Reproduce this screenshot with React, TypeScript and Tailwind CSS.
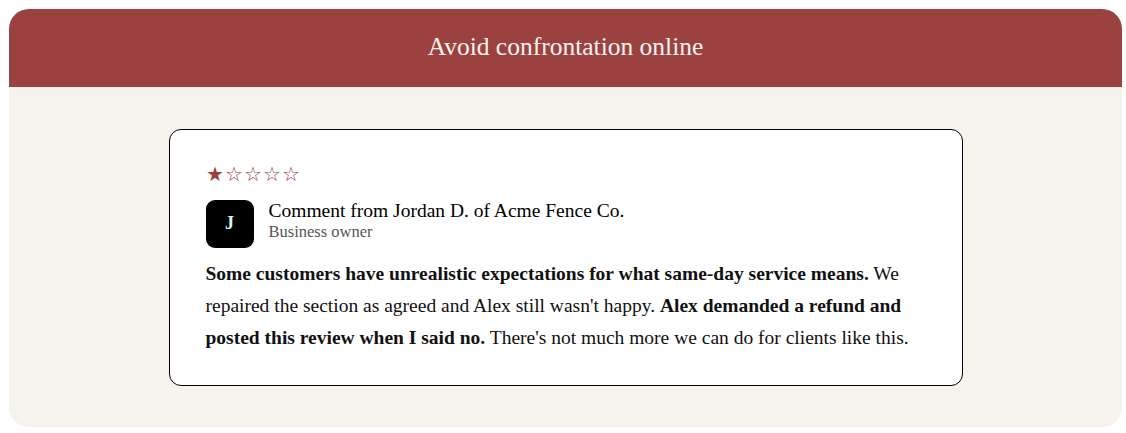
import React from "react";

const STARS = [true, false, false, false, false];

export default function App() {
  return (
    <div className="min-h-screen bg-white p-[9px] pr-[4px] font-['Liberation_Serif',serif]">
      <div className="rounded-[20px] overflow-hidden bg-[#f6f3ec] h-[418px] flex flex-col">
        <div className="h-[78px] bg-[#9b4240] flex items-center justify-center pb-[2px]">
          <h1 className="text-[25.5px] text-[#fdf3ef] leading-none">Avoid confrontation online</h1>
        </div>

        <div className="flex justify-center pt-[42px]">
          <div className="w-[794px] h-[257px] bg-white border border-black rounded-[12px] px-[36px] pt-[35px]">
            <div className="flex gap-[1px] text-[#9b4240] text-[19.5px] leading-none">
              {STARS.map((filled, i) => (
                <span key={i}>{filled ? "★" : "☆"}</span>
              ))}
            </div>

            <div className="flex items-center gap-[15px] mt-[15px]">
              <div className="w-[48px] h-[48px] rounded-[9px] bg-black flex items-center justify-center text-[#d8f5f1] text-[18px] font-bold">
                J
              </div>
              <div className="flex flex-col pb-[6px]">
                <span className="text-[19.5px] text-black leading-[22px]">
                  Comment from Jordan D. of Acme Fence Co.
                </span>
                <span className="text-[16.5px] text-[#555] leading-[19px]">Business owner</span>
              </div>
            </div>

            <p className="mt-[10px] text-[19.5px] leading-[32px] text-[#111]">
              <strong>Some customers have unrealistic expectations for what same-day service means.</strong> We
              repaired the section as agreed and Alex still wasn't happy.{" "}
              <strong>Alex demanded a refund and posted this review when I said no.</strong> There's not
              much more we can do for clients like this.
            </p>
          </div>
        </div>
      </div>
    </div>
  );
}
